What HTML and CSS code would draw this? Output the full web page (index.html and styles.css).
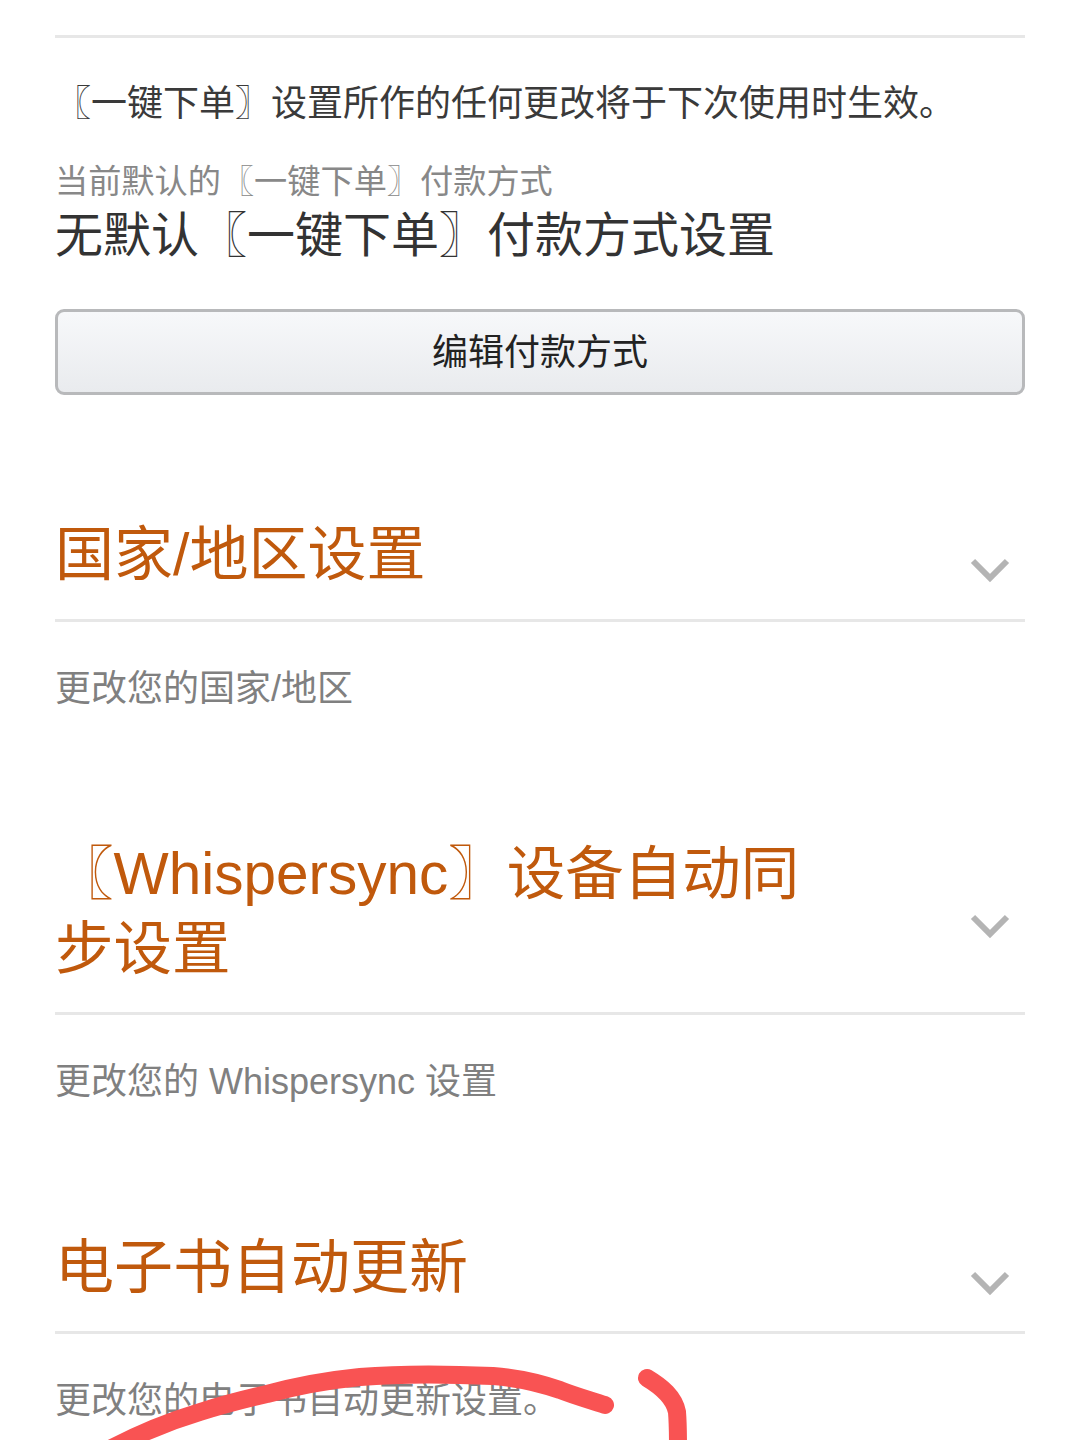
FILE: index.html
```html
<!DOCTYPE html>
<html lang="zh-CN">
<head>
<meta charset="utf-8">
<title>设置</title>
<link rel="stylesheet" href="styles.css">
</head>
<body>
<main class="page">
  <section class="oneclick">
    <p class="note">〖一键下单〗设置所作的任何更改将于下次使用时生效。</p>
    <p class="label">当前默认的〖一键下单〗付款方式</p>
    <p class="value">无默认〖一键下单〗付款方式设置</p>
    <button class="btn" type="button">编辑付款方式</button>
  </section>

  <section class="group group-country">
    <header class="head">
      <h2 class="title">国家/地区设置</h2>
      <svg class="chev" viewBox="0 0 40 26"><path d="M3 4 L20 21 L37 4"/></svg>
    </header>
    <p class="desc">更改您的国家/地区</p>
  </section>

  <section class="group group-sync">
    <header class="head">
      <h2 class="title title-wrap">〖Whispersync〗设备自动同步设置</h2>
      <svg class="chev" viewBox="0 0 40 26"><path d="M3 4 L20 21 L37 4"/></svg>
    </header>
    <p class="desc">更改您的 Whispersync 设置</p>
  </section>

  <section class="group group-update">
    <header class="head head-tight">
      <h2 class="title">电子书自动更新</h2>
      <svg class="chev" viewBox="0 0 40 26"><path d="M3 4 L20 21 L37 4"/></svg>
    </header>
    <p class="desc">更改您的电子书自动更新设置。</p>
  </section>
</main>
<svg class="marks" viewBox="0 0 1080 1440">
  <path d="M110 1449 C140 1433 170 1421 200 1412 C222 1405 245 1399 267 1394 C300 1385 330 1380 360 1377 C395 1374 450 1374 493 1376 C520 1378 540 1383 560 1390 C575 1396 590 1400 605 1405"/>
  <path d="M647 1378 C662 1387 674 1397 677 1412 C678 1424 678 1436 678 1448"/>
</svg>
</body>
</html>
```

FILE: styles.css
```css
* { box-sizing: border-box; }
html, body { margin: 0; height: 1440px; overflow: hidden; background: #fff; }
body {
  position: relative;
  font-family: "Liberation Sans", "Noto Sans CJK SC", sans-serif;
  color: #333;
}
.page { padding: 35px 55px 0; }
.oneclick { border-top: 3px solid #e7e7e7; }
p { margin: 0; }
.note { font-size: 36px; line-height: 48px; margin: 42px 0 0; color: #3a3a3a; }
.label { font-size: 33.2px; line-height: 40px; margin: 34px 0 0; color: #888; }
.value { font-size: 48px; line-height: 56px; margin: 6px 0 0; color: #333; }
.btn {
  display: block;
  width: 100%;
  height: 86px;
  margin-top: 45px;
  border: 3px solid #b8b9bb;
  border-radius: 9px;
  background: linear-gradient(#f7f8fa, #e9ebee);
  font: inherit;
  font-size: 36px;
  color: #222;
  padding: 0 0 6px;
}
.group-country { margin-top: 123px; }
.group-sync { margin-top: 124px; }
.group-update { margin-top: 125px; }
.head {
  display: flex;
  justify-content: space-between;
  align-items: center;
  border-bottom: 3px solid #e7e7e7;
  padding: 0 15px 26px 0;
}
.head-tight { padding-bottom: 25px; }
.title {
  margin: 0;
  font-size: 59px;
  line-height: 75px;
  font-weight: 400;
  color: #c0590c;
}
.title-wrap { width: 770px; font-size: 58.5px; line-height: 74.5px; }
.chev { width: 40px; height: 26px; margin-top: 28px; flex: none; }
.chev path { fill: none; stroke: #b4b4b4; stroke-width: 6; stroke-linejoin: miter; }
.desc { font-size: 36px; line-height: 48px; margin: 43px 0 0; color: #808080; }
.marks { position: absolute; left: 0; top: 0; width: 1080px; height: 1440px; pointer-events: none; }
.marks path { fill: none; stroke: #f95353; stroke-width: 18; stroke-linecap: round; }
```
